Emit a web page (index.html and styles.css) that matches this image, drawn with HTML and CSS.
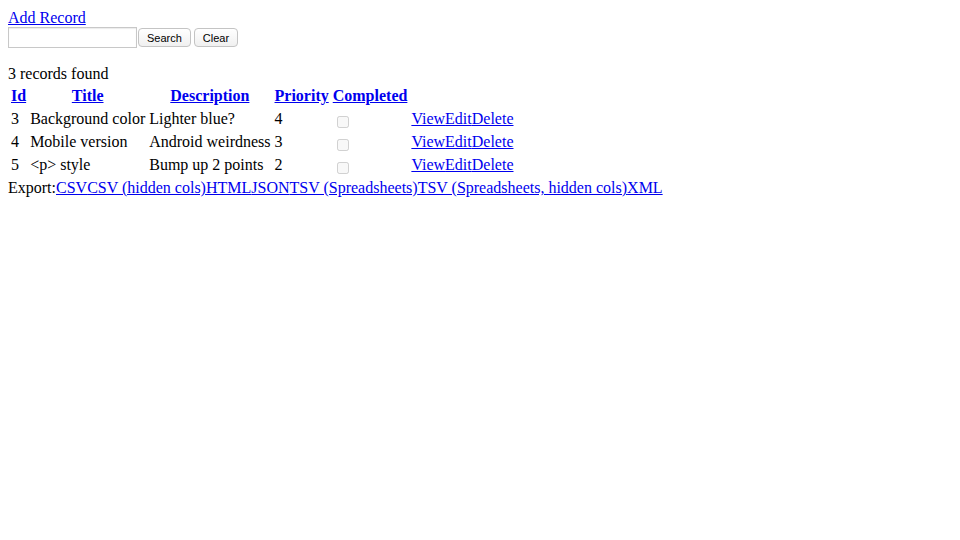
FILE: index.html
```html
<!DOCTYPE html>
<html lang="en">
  <head>
    <meta charset="UTF-8" />
    <title>Records</title>
    <link rel="stylesheet" href="styles.css">
  </head>
  <body>
    <a href="#">Add Record</a>
    <form class="searchForm">
      <input type="text" class="searchBox" />
      <button type="button" class="btn">Search</button>
      <button type="button" class="btn">Clear</button>
    </form>

    <div class="count">3 records found</div>
    <table class="records">
      <tr>
        <th><a href="#">Id</a></th>
        <th><a href="#">Title</a></th>
        <th><a href="#">Description</a></th>
        <th><a href="#">Priority</a></th>
        <th><a href="#">Completed</a></th>
        <th></th>
      </tr>
      <tr>
        <td>3</td>
        <td>Background color</td>
        <td>Lighter blue?</td>
        <td>4</td>
        <td class="check"><input type="checkbox" disabled /></td>
        <td><a href="#">View</a><a href="#">Edit</a><a href="#">Delete</a></td>
      </tr>
      <tr>
        <td>4</td>
        <td>Mobile version</td>
        <td>Android weirdness</td>
        <td>3</td>
        <td class="check"><input type="checkbox" disabled /></td>
        <td><a href="#">View</a><a href="#">Edit</a><a href="#">Delete</a></td>
      </tr>
      <tr>
        <td>5</td>
        <td>&lt;p&gt; style</td>
        <td>Bump up 2 points</td>
        <td>2</td>
        <td class="check"><input type="checkbox" disabled /></td>
        <td><a href="#">View</a><a href="#">Edit</a><a href="#">Delete</a></td>
      </tr>
    </table>
    <div class="export">Export:<a href="#">CSV</a><a href="#">CSV (hidden cols)</a><a href="#">HTML</a><a href="#">JSON</a><a href="#">TSV (Spreadsheets)</a><a href="#">TSV (Spreadsheets, hidden cols)</a><a href="#">XML</a></div>
  </body>
</html>
```

FILE: styles.css
```css
body {
  margin: 8px;
  font-family: "Liberation Serif", serif;
  font-size: 16px;
  line-height: 19px;
  color: #000;
}

a {
  color: #0000ee;
}

.searchForm {
  margin: 0 0 16px 0;
  display: flex;
  align-items: center;
}

.searchBox {
  width: 125px;
  height: 17px;
  margin: 0 1px 0 0;
  padding: 1px;
  border: 1px solid #c8c8c8;
  box-shadow: inset 0 1px 1px rgba(0, 0, 0, 0.08);
}

.btn {
  font-family: "Liberation Sans", Arial, sans-serif;
  font-size: 11px;
  line-height: normal;
  height: 19px;
  padding: 0 8px;
  margin: 0;
  background: linear-gradient(#ffffff, #f0f0f0);
  border: 1px solid #c4c4c4;
  border-radius: 4px;
  color: #000;
}

.btn + .btn {
  margin-left: 3px;
}

.records {
  border-spacing: 2px;
}

.records td,
.records th {
  padding: 1px;
}

.check input {
  margin: 0 0 0 4px;
  width: 12px;
  height: 12px;
  vertical-align: -4px;
}

.export {
  margin-top: 1px;
}
```
